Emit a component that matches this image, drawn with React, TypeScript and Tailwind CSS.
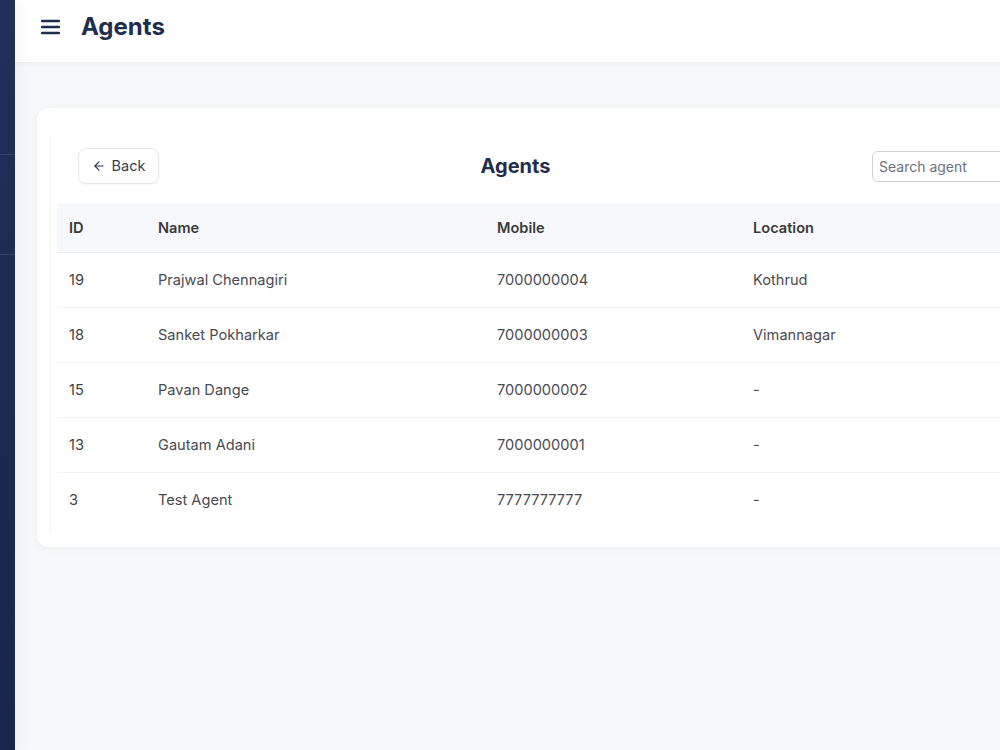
import { ArrowLeft } from "lucide-react"

const agents = [
  { id: 19, name: "Prajwal Chennagiri", mobile: "7000000004", location: "Kothrud" },
  { id: 18, name: "Sanket Pokharkar", mobile: "7000000003", location: "Vimannagar" },
  { id: 15, name: "Pavan Dange", mobile: "7000000002", location: "-" },
  { id: 13, name: "Gautam Adani", mobile: "7000000001", location: "-" },
  { id: 3, name: "Test Agent", mobile: "7777777777", location: "-" },
]

export default function App() {
  return (
    <div
      className="flex h-[750px] w-[1000px] overflow-hidden bg-[#f7f8fa]"
      style={{ fontFamily: "Inter, 'Noto Sans', sans-serif" }}
    >
      {/* Sidebar (collapsed) */}
      <div className="relative z-10 flex w-[15px] shrink-0 flex-col bg-gradient-to-b from-[#213059] to-[#19254a] shadow-[4px_0_14px_rgba(0,0,0,0.05)]">
        <div className="h-[155px] border-b border-[#33426a]" />
        <div className="h-[100px] border-b border-[#33426a]" />
      </div>

      <div className="flex w-[1120px] shrink-0 flex-col">
        {/* Top bar */}
        <div className="flex h-[62px] items-center gap-[21px] bg-white pb-[9px] pl-[26px] shadow-[0_1px_6px_rgba(0,0,0,0.05)]">
          <svg width="19" height="16" viewBox="0 0 19 16" className="text-[#1f2d4f]">
            <path d="M1 2h17M1 8h17M1 14h17" stroke="currentColor" strokeWidth="2.4" strokeLinecap="round" />
          </svg>
          <h1 className="text-[24px] font-bold text-[#1f2d4f]">Agents</h1>
        </div>

        {/* Content */}
        <div className="pl-[22px] pt-[46px]">
          <div className="w-[1075px] rounded-xl bg-white pb-[13px] pl-[13px] pr-[13px] pt-[27px] shadow-[0_2px_10px_rgba(0,0,0,0.04)]">
            <div className="border-l border-[#f3f4f6] px-[6px] pb-[7px]">
              {/* Card header */}
              <div className="flex items-center px-[21px] pt-[13px]">
                <button className="flex h-[36px] w-[81px] items-center justify-center gap-[6px] rounded-lg border border-[#e5e7eb] bg-white text-[14.5px] text-[#374151] shadow-[0_1px_2px_rgba(0,0,0,0.04)]">
                  <ArrowLeft size={14} strokeWidth={2} className="text-[#2a344d]" />
                  Back
                </button>
                <h2 className="flex-1 text-center text-[20px] font-bold text-[#1f2d4f]">Agents</h2>
                <input
                  placeholder="Search agent"
                  className="h-[31px] w-[200px] rounded-md border border-[#cfd4da] px-[6px] text-[14px] text-[#374151] placeholder:text-[#6b7280] outline-none"
                />
              </div>

              {/* Table */}
              <table className="mt-[19px] w-full border-collapse text-left text-[14.6px]">
                <thead>
                  <tr className="h-[49px] border-b border-[#eceef2] bg-[#f7f8fb]">
                    <th className="w-[101px] pl-[12px] pt-[3px] font-semibold text-[#3a3a3a]">ID</th>
                    <th className="w-[339px] pt-[3px] font-semibold text-[#3a3a3a]">Name</th>
                    <th className="w-[256px] pt-[3px] font-semibold text-[#3a3a3a]">Mobile</th>
                    <th className="pt-[3px] font-semibold text-[#3a3a3a]">Location</th>
                  </tr>
                </thead>
                <tbody>
                  {agents.map((a, i) => (
                    <tr
                      key={a.id}
                      className={i < agents.length - 1 ? "h-[55px] border-b border-[#f1f2f4]" : "h-[55px]"}
                    >
                      <td className="pl-[12px] pt-[3px] text-[#3f3f46]">{a.id}</td>
                      <td className="pt-[3px] text-[#4b4b52]">{a.name}</td>
                      <td className="pt-[3px] text-[#4b4b52]">{a.mobile}</td>
                      <td className="pt-[3px] text-[#4b4b52]">{a.location}</td>
                    </tr>
                  ))}
                </tbody>
              </table>
            </div>
          </div>
        </div>
      </div>
    </div>
  )
}
